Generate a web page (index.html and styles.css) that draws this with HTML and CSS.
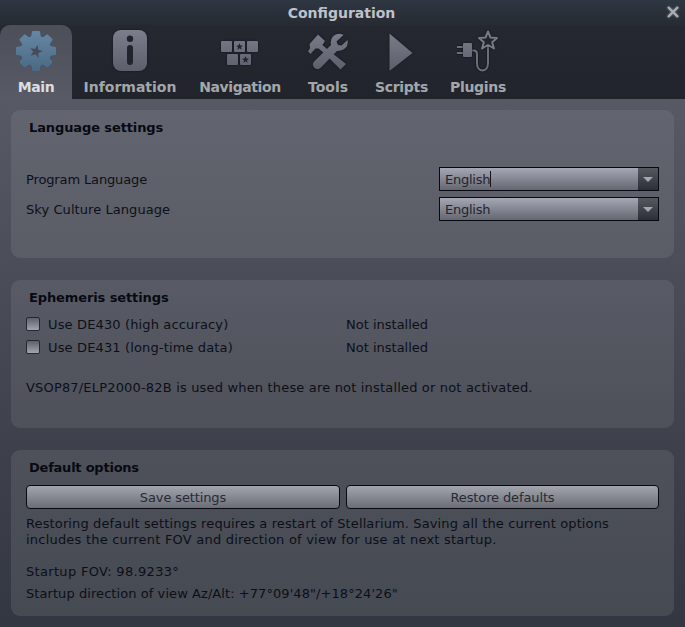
FILE: index.html
```html
<!DOCTYPE html>
<html lang="en">
<head>
<meta charset="utf-8">
<title>Configuration</title>
<link rel="stylesheet" href="styles.css">
</head>
<body>
<main class="window">
  <header class="titlebar">
    <h1 class="title">Configuration</h1>
    <button class="close" aria-label="Close"><svg width="16" height="16" viewBox="0 0 16 16"><path d="M3 3l10 10M13 3L3 13"/></svg></button>
  </header>
  <nav class="tabs">
    <svg class="defs" width="0" height="0"><defs>
      <linearGradient id="gray" gradientUnits="userSpaceOnUse" x1="0" y1="4" x2="0" y2="46"><stop stop-color="#7b7d8b"/><stop offset="1" stop-color="#5b5d69"/></linearGradient>
      <linearGradient id="blue" gradientUnits="userSpaceOnUse" x1="0" y1="4" x2="0" y2="46"><stop stop-color="#6687a3"/><stop offset="1" stop-color="#486783"/></linearGradient>
      <path id="star" d="M0-1L.25-.33L.95-.31L.4.13L.59.81L0 .42L-.59.81L-.4.13L-.95-.31L-.25-.33Z"/>
      <path id="teeth" d="M19 10L19.800 4.800Q20 4 20.800 4H27.200Q28 4 28.200 4.800L29 10V38L28.200 43.200Q28 44 27.200 44H20.800Q20 44 19.800 43.200L19 38Z"/>
      <clipPath id="gear">
        <circle cx="24" cy="24" r="15.500"/><use href="#teeth"/>
        <use href="#teeth" transform="rotate(45 24 24)"/><use href="#teeth" transform="rotate(90 24 24)"/><use href="#teeth" transform="rotate(135 24 24)"/>
      </clipPath>
    </defs></svg>
    <a class="tab tab-main active"><svg class="icon" viewBox="0 0 48 48">
      <g class="gear"><rect width="48" height="48" clip-path="url(#gear)"/></g>
      <use href="#star" transform="translate(24 24.500) rotate(14) scale(6.800)" fill="#484b56"/>
    </svg><span>Main</span></a>
    <a class="tab tab-information"><svg class="icon" viewBox="0 0 48 48">
      <rect class="shape" x="7" y="3" width="34" height="41" rx="8"/>
      <circle cx="24" cy="11.7" r="3.2" fill="#22242c"/><rect x="21" y="18" width="6" height="20" rx="3" fill="#22242c"/>
    </svg><span>Information</span></a>
    <a class="tab tab-navigation"><svg class="icon" viewBox="0 0 48 48">
      <g class="shape"><rect x="5" y="14" width="11" height="11" rx="1"/><rect x="18" y="14" width="11" height="11" rx="1"/><rect x="31" y="14" width="11" height="11" rx="1"/><rect x="11" y="27" width="11" height="11" rx="1"/><rect x="24" y="27" width="11" height="11" rx="1"/></g>
      <use href="#star" transform="translate(23.5 19.8) scale(3.7)" fill="#20232b"/><use href="#star" transform="translate(29.5 32.8) scale(3.7)" fill="#20232b"/>
    </svg><span>Navigation</span></a>
    <a class="tab tab-tools"><svg class="icon" viewBox="0 0 48 48"><g class="shape">
      <path d="M14 7.500L21 14L18.500 18L23 22L42 37L36.500 42.500L20 26L14.500 21.500L11.500 21.500L6.500 27L4 24.500L6 21L5.500 17Z"/>
      <path d="M37.500 7Q32 6 28.500 10Q26 13 27 18L10 34.500Q7.500 38 10.500 41Q14 43.500 17 40.500L33 24Q38 24.500 41.500 21Q44.500 18 43.500 13L37.500 18.500L34 18L32.500 14.500L39.500 8Z"/>
    </g></svg><span>Tools</span></a>
    <a class="tab tab-scripts"><svg class="icon" viewBox="0 0 48 48"><path class="shape" d="M11.500 6.500V44L34.500 26Z"/></svg><span>Scripts</span></a>
    <a class="tab tab-plugins"><svg class="icon" viewBox="0 0 48 48">
      <path class="wire dark" d="M18 23.500H20Q23 23.500 23 27V36C23 46 34 46 34 36V19M3 20H9M3 26H9"/>
      <path class="wire" d="M18 23.500H20Q23 23.500 23 27V36C23 46 34 46 34 36V19M3 20H9M3 26H9"/>
      <path class="starline" d="M34 4.500L36.500 10.500L43 11L38.200 15.200L40 21.500L34 18L28 21.500L29.800 15.200L25 11L31.500 10.500Z"/>
      <rect class="shape" x="9" y="16" width="9" height="14" rx="1"/>
    </svg><span>Plugins</span></a>
  </nav>
  <div class="content">
    <section class="panel language">
      <h2>Language settings</h2>
      <div class="field"><span class="t-program">Program Language</span><div class="combo"><span class="value caret">English</span><i class="drop"></i></div></div>
      <div class="field"><span class="t-sky">Sky Culture Language</span><div class="combo"><span class="value">English</span><i class="drop"></i></div></div>
    </section>
    <section class="panel ephemeris">
      <h2>Ephemeris settings</h2>
      <div class="check"><i class="box"></i><span class="name">Use DE430 (high accuracy)</span><span>Not installed</span></div>
      <div class="check"><i class="box"></i><span class="name">Use DE431 (long-time data)</span><span>Not installed</span></div>
      <p class="note">VSOP87/ELP2000-82B is used when these are not installed or not activated.</p>
    </section>
    <section class="panel defaults">
      <h2>Default options</h2>
      <div class="actions"><button>Save settings</button><button>Restore defaults</button></div>
      <p class="restore">Restoring default settings requires a restart of Stellarium. Saving all the current options<br><span class="line2">includes the current FOV and direction of view for use at next startup.</span></p>
      <p class="fov">Startup FOV: 98.9233°</p>
      <p class="direction">Startup direction of view Az/Alt: +77°09'48"/+18°24'26"</p>
    </section>
  </div>
</main>
</body>
</html>
```
FILE: styles.css
```css
* { box-sizing: border-box; }
body { margin: 0; font: 13px/16px Verdana, "DejaVu Sans", sans-serif; color: #0d0f18; }
h1, h2, p { margin: 0; }
button { font: inherit; padding: 0; }
.window { width: 685px; height: 627px; overflow: hidden; background: linear-gradient(#575a65 99px, #4a4c57 280px, #3e414b 450px, #333741 627px); }
.titlebar { height: 25px; position: relative; background: linear-gradient(#2e3742, #262a33); }
.title { font-size: 14px; line-height: 27px; height: 25px; text-align: center; color: #bfc1c9; padding-right: 2px; }
.close { position: absolute; right: 4px; top: 4px; width: 16px; height: 16px; border: 0; background: none; }
.close svg { display: block; fill: none; stroke: #a9adb4; stroke-width: 2.4; filter: drop-shadow(0 0 1px #7c8087); }
.tabs { height: 74px; display: flex; background: linear-gradient(#252830, #22242c); }
.defs { position: absolute; }
.tab { display: flex; flex-direction: column; align-items: center; padding-top: 2px; font-weight: bold; font-size: 14px; line-height: 18px; color: #a3a7aa; white-space: nowrap; }
.tab span { margin-top: 3px; }
.icon { width: 48px; height: 48px; display: block; flex: none; }
.active { background: linear-gradient(#4c4f59, #585b66); border-radius: 10px 10px 0 0; color: #dcdde0; }
.tab-main { width: 72px; letter-spacing: -.4px; }
.tab-information { width: 116px; }
.tab-navigation { width: 104px; letter-spacing: -.4px; }
.tab-tools { width: 72px; }
.tab-scripts { width: 75px; letter-spacing: -.28px; }
.tab-plugins { width: 78px; letter-spacing: -.28px; }
.gear { fill: url(#blue); filter: drop-shadow(0 0 .7px #263849); }
.shape { fill: url(#gray); filter: drop-shadow(0 0 1px #111219); }
.wire { fill: none; stroke: #6c6e7b; stroke-width: 2; }
.dark { stroke: #191b22; stroke-width: 4; }
.starline { fill: #22242c; stroke: #777987; stroke-width: 2; stroke-linejoin: round; filter: drop-shadow(0 0 1px #111219); }
.content { display: flex; flex-direction: column; gap: 22px; padding: 11px 11px; }
.panel { height: 148px; border-radius: 9px; padding: 9px 15px; }
.language { background: linear-gradient(#62656f, #5a5d66); }
.ephemeris { background: linear-gradient(#585b65, #4e515a); }
.defaults { height: 166px; background: linear-gradient(#4e515a, #464a53); }
h2 { font-size: 13px; line-height: 17px; padding-left: 3px; color: #080a12; letter-spacing: -.11px; }
.defaults h2 { letter-spacing: -.23px; }
.language h2 { margin-bottom: 31px; }
.field { display: flex; justify-content: space-between; align-items: center; height: 24px; margin-bottom: 6px; }
.t-program, .t-sky { padding-top: 2px; letter-spacing: -.13px; }
.t-sky { letter-spacing: .07px; }
.combo { display: flex; width: 220px; height: 24px; border: 1px solid #080a12; background: linear-gradient(#a5a8b4, #646771); color: #22252e; }
.value { display: flex; align-items: center; height: 23px; padding-left: 5px; margin-right: auto; letter-spacing: -.25px; }
.caret::after { content: ""; width: 1px; height: 16px; margin-bottom: 1px; background: #11131b; }
.drop { width: 20px; background: linear-gradient(#56585f, #2c2f37); display: grid; place-items: center; }
.drop::after { content: ""; border: 5px solid transparent; border-top-color: #a3a6ad; border-bottom: 0; }
.check { display: flex; align-items: center; height: 23px; }
.ephemeris h2 { margin-bottom: 7px; }
.box { width: 14px; height: 14px; border: 1px solid #252832; border-radius: 2px; background: linear-gradient(#5d606a, #a2a5ad); margin: 0 8px 2px 0; }
.name { width: 298px; letter-spacing: .14px; }
.note { margin-top: 21px; letter-spacing: .175px; }
.actions { display: grid; grid-template-columns: 314px 313px; gap: 6px; margin: 9px 0 7px; }
.actions button { height: 24px; padding-top: 1px; border: 1px solid #080a12; border-radius: 4px; background: linear-gradient(#a2a5ad, #6b6e77); color: #272a33; letter-spacing: -.12px; }
.restore { letter-spacing: .125px; }
.line2 { letter-spacing: .21px; }
.fov { margin-top: 16px; letter-spacing: .32px; }
.direction { margin-top: 6px; letter-spacing: .07px; }
```
